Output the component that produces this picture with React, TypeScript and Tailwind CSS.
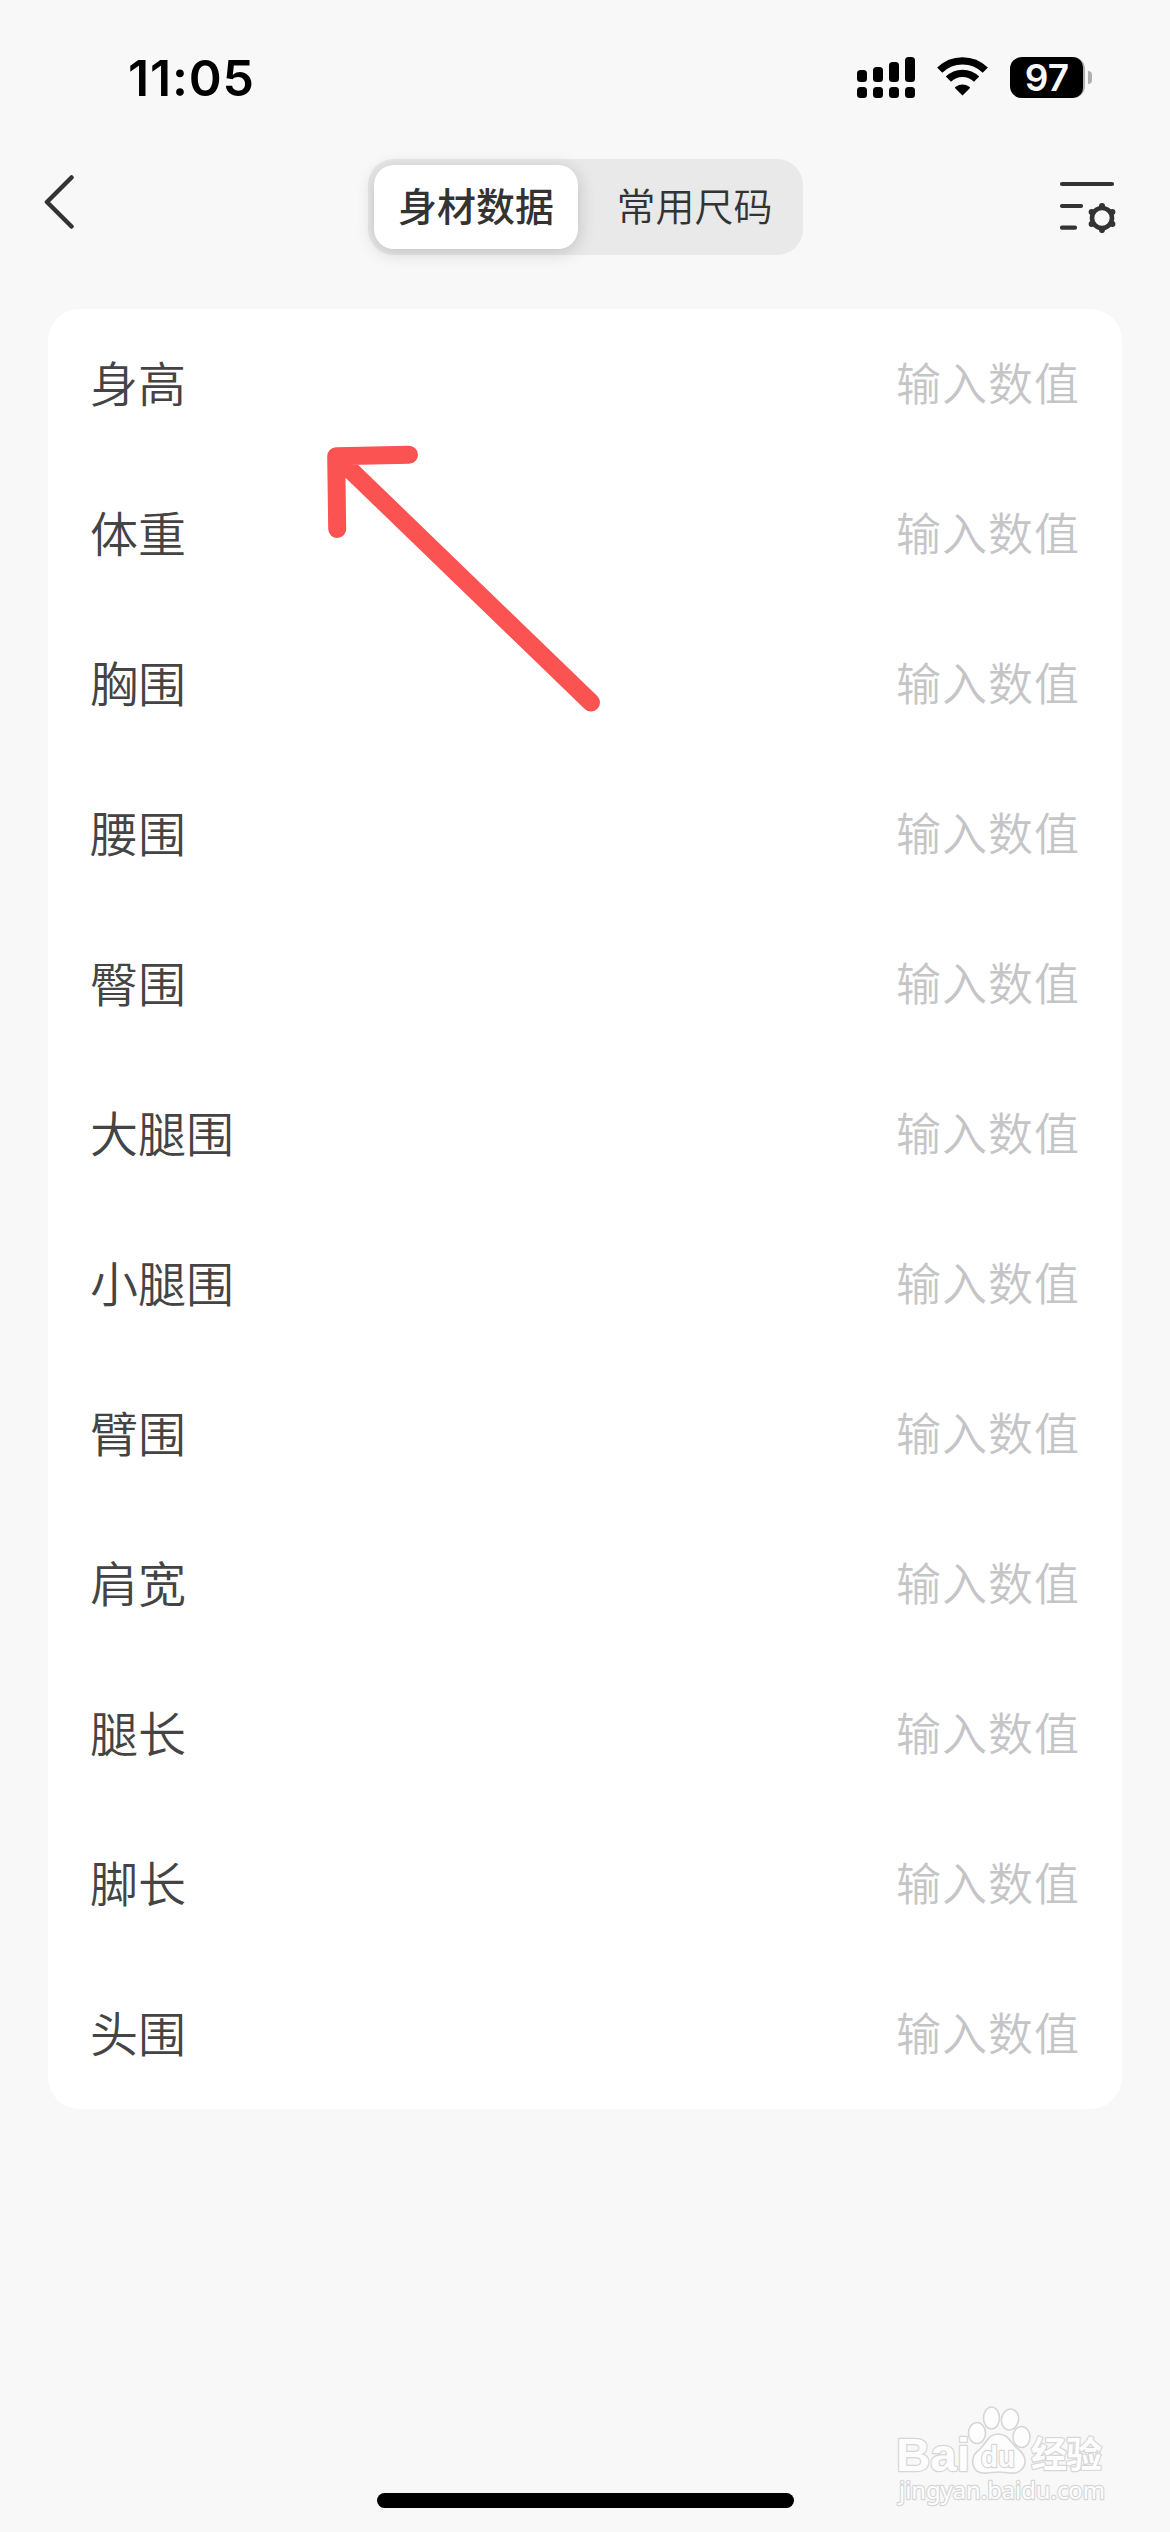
const fields = [
  '身高',
  '体重',
  '胸围',
  '腰围',
  '臀围',
  '大腿围',
  '小腿围',
  '臂围',
  '肩宽',
  '腿长',
  '脚长',
  '头围'
];

function StatusBar() {
  return (
    <div className="flex h-[141px] items-start justify-between pr-[78px] pl-[128px] text-black">
      <span className="mt-[48px] font-['Inter',sans-serif] text-[50px] leading-[60px] font-semibold tracking-[0.8px]">
        11:05
      </span>

      <div className="mt-[57px] flex items-center">
        {/* Signal */}
        <svg width="58" height="41" viewBox="0 0 58 41" fill="currentColor">
          <rect x="0" y="13" width="10" height="12" rx="3.5" />
          <rect x="16" y="10" width="10" height="15" rx="3.5" />
          <rect x="32" y="5" width="10" height="20" rx="3.5" />
          <rect x="48" y="0" width="10" height="25" rx="3.5" />
          <rect x="0" y="30" width="10" height="11" rx="3.5" />
          <rect x="16" y="30" width="10" height="11" rx="3.5" />
          <rect x="32" y="30" width="10" height="11" rx="3.5" />
          <rect x="48" y="30" width="10" height="11" rx="3.5" />
        </svg>

        {/* Wifi */}
        <svg className="ml-[22px]" width="51" height="41" viewBox="0 0 51 41">
          <g fill="none" stroke="currentColor" strokeWidth="7.4">
            <path d="M2.7 13.2 A32.5 32.5 0 0 1 48.3 13.2" />
            <path d="M11.4 22.2 A20 20 0 0 1 39.6 22.2" />
          </g>
          <path
            d="M25.5 38.4 L18.2 31.2 Q17.6 30.4 18.6 29.8 Q25.5 25.2 32.4 29.8 Q33.4 30.4 32.8 31.2 Z"
            fill="currentColor"
          />
        </svg>

        {/* Battery */}
        <div className="ml-[22px] flex items-center">
          <div className="flex h-[41px] w-[75px] rounded-[12px] bg-[#b0b0b0]">
            <div className="flex w-[73px] items-center justify-center rounded-l-[12px] rounded-r-[10px] bg-black pl-[1px] font-['Inter',sans-serif] text-[37px] leading-[41px] font-semibold text-[#f8f8f8]">
              97
            </div>
          </div>
          <div className="ml-[3px] h-[13px] w-[4px] rounded-r-full bg-[#b0b0b0]"></div>
        </div>
      </div>
    </div>
  );
}

function Header() {
  return (
    <header className="grid h-[132px] grid-cols-[324px_435px_1fr] items-center pr-[54px] pl-[44px] text-[#333333]">
      <button type="button" aria-label="返回">
        <svg className="mb-[10px]" width="32" height="56" viewBox="0 0 32 56" fill="none">
          <path d="M27.5 3.5 L3 28 L27.5 52.5" stroke="currentColor" strokeWidth="4.5" strokeLinecap="round" strokeLinejoin="round" />
        </svg>
      </button>

      <div className="flex h-[96px] rounded-[26px] bg-[#e9e9e9] p-[6px] text-[39px] leading-none">
        <div className="flex w-[204px] items-center justify-center rounded-[20px] bg-white pb-[5px] font-medium shadow-[0_3px_18px_rgba(0,0,0,0.18)]">
          身材数据
        </div>
        <div className="flex flex-1 items-center justify-center pb-[5px] pl-[14px] font-[350]">常用尺码</div>
      </div>

      <button type="button" aria-label="设置" className="justify-self-end">
        <svg width="57" height="52" viewBox="0 0 57 52" fill="none" stroke="currentColor" strokeLinecap="round">
          <path d="M3 3 H53 M3 25 H22 M3 46.7 H16" strokeWidth="4.2" />
          <circle cx="43" cy="37" r="10" strokeWidth="4.6" />
          <path
            d="M43 25 v.1 M53.400 31 v.1 M53.400 43 v.1 M43 49 v.1 M32.600 43 v.1 M32.600 31 v.1"
            strokeWidth="6"
          />
        </svg>
      </button>
    </header>
  );
}

function Watermark() {
  return (
    <svg
      className="absolute top-[2400px] left-[890px]"
      width="225"
      height="110"
      viewBox="0 0 225 110"
      fill="#fdfdfd"
      stroke="#d6d6d6"
      strokeWidth="2.4"
      strokeLinejoin="round"
    >
      <text x="6" y="71" fontSize="47" fontWeight="700" fontFamily="Liberation Sans, sans-serif" textLength="74" lengthAdjust="spacingAndGlyphs" paintOrder="stroke">
        Bai
      </text>
      <g strokeWidth="1.6">
        <ellipse cx="87" cy="33" rx="8.5" ry="10.5" />
        <ellipse cx="101.5" cy="18" rx="8" ry="11" />
        <ellipse cx="120" cy="19.5" rx="8.5" ry="10.5" transform="rotate(12 120 19.5)" />
        <ellipse cx="131.5" cy="37" rx="8.5" ry="10.5" />
        <path d="M108 34 C119 34 120 43 128 49 C136 55 137 64 132 69 C126 76 117 72 109 72 C101 72 90 76 85 69 C81 63 82 55 89 50 C97 43 98 34 108 34 Z" />
      </g>
      <text x="91" y="67" fontSize="29" fontWeight="700" fontFamily="Liberation Sans, sans-serif" textLength="34" lengthAdjust="spacingAndGlyphs" paintOrder="stroke">
        du
      </text>
      <text x="141" y="68" fontSize="36" fontWeight="700" fontFamily="Noto Sans CJK SC, sans-serif" textLength="71" paintOrder="stroke">
        经验
      </text>
      <text x="9" y="99" fontSize="24" fontFamily="Noto Sans, sans-serif" textLength="206" lengthAdjust="spacingAndGlyphs" paintOrder="stroke">
        jingyan.baidu.com
      </text>
    </svg>
  );
}

export default function App() {
  return (
    <div className="relative flex h-[2532px] w-[1170px] flex-col overflow-hidden bg-[#f8f8f8] font-['Noto_Sans_CJK_SC',sans-serif]">
      <StatusBar />
      <Header />

      <main className="mx-[48px] mt-[36px] rounded-[32px] bg-white px-[42px]">
        {fields.map((label) => (
          <div key={label} className="flex h-[150px] items-center justify-between pb-[6px] font-[350]">
            <span className="text-[48px] leading-none text-[#444444]">{label}</span>
            <span className="text-[45px] leading-none tracking-[1px] text-[#c5c5c7]">输入数值</span>
          </div>
        ))}
      </main>

      {/* Home indicator */}
      <div className="mx-auto mt-auto mb-[24px] h-[15px] w-[417px] rounded-full bg-black"></div>

      {/* Arrow pointing at the first row */}
      <svg className="absolute top-[440px] left-[320px]" width="290" height="280" viewBox="0 0 290 280" fill="none">
        <path
          d="M89 14.8 L16.2 16.2 L17.2 89 M16.2 16.2 L271 262.5"
          stroke="#fb5252"
          strokeWidth="18"
          strokeLinecap="round"
          strokeLinejoin="round"
        />
      </svg>

      <Watermark />
    </div>
  );
}
